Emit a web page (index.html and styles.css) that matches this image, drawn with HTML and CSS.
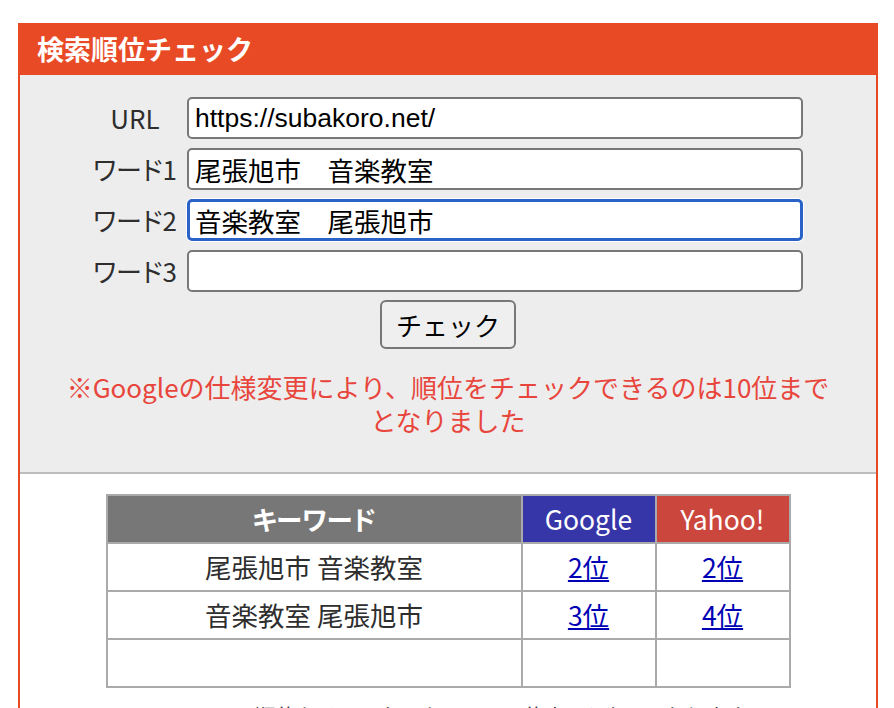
FILE: index.html
```html
<!DOCTYPE html>
<html lang="ja">
<head>
<meta charset="utf-8">
<title>検索順位チェック</title>
<link rel="stylesheet" href="styles.css">
</head>
<body>
<div class="page">
  <section class="box">
    <h2 class="box-title">検索順位チェック</h2>
    <div class="form-area">
      <div class="form-grid">
        <label class="field-label">URL</label>
        <input class="field-input" type="text" value="https://subakoro.net/">
        <label class="field-label">ワード1</label>
        <input class="field-input" type="text" value="尾張旭市　音楽教室">
        <label class="field-label">ワード2</label>
        <input class="field-input is-focused" type="text" value="音楽教室　尾張旭市">
        <label class="field-label">ワード3</label>
        <input class="field-input" type="text" value="">
      </div>
      <div class="btn-row"><button class="check-btn" type="button">チェック</button></div>
      <p class="notice">※Googleの仕様変更により、順位をチェックできるのは10位まで<br>となりました</p>
    </div>
    <div class="result-area">
      <table class="rank-table">
        <thead>
          <tr>
            <th class="th-keyword">キーワード</th>
            <th class="th-google">Google</th>
            <th class="th-yahoo">Yahoo!</th>
          </tr>
        </thead>
        <tbody>
          <tr><td>尾張旭市 音楽教室</td><td><a href="#">2位</a></td><td><a href="#">2位</a></td></tr>
          <tr><td>音楽教室 尾張旭市</td><td><a href="#">3位</a></td><td><a href="#">4位</a></td></tr>
          <tr><td></td><td></td><td></td></tr>
        </tbody>
      </table>
      <p class="note">※Yahoo!の順位をチェックできるのは10位までとなっております</p>
    </div>
  </section>
</div>
</body>
</html>
```
FILE: styles.css
```css
html, body {
  margin: 0;
  padding: 0;
  background: #ffffff;
}
body {
  font-family: "Noto Sans CJK JP", "Noto Sans", sans-serif;
  color: #333333;
}
.page {
  padding: 23px 16px 0 18px;
}
.box {
  border: 2px solid #e94a26;
  border-top: 0;
  background: #ffffff;
}
.box-title {
  margin: 0;
  height: 52px;
  background: #e94a26;
  color: #ffffff;
  font-size: 27px;
  font-weight: bold;
  line-height: 52px;
  padding-left: 17px;
}
.form-area {
  background: #ededed;
  padding: 22px 0 36px;
  border-bottom: 2px solid #bdbdbd;
}
.form-grid {
  display: grid;
  grid-template-columns: 92px 616px;
  column-gap: 6px;
  row-gap: 9px;
  justify-content: center;
  align-items: center;
  padding-right: 4px;
}
.field-label {
  text-align: center;
  font-size: 26px;
  color: #2e2e2e;
  font-feature-settings: "palt";
  line-height: 1;
}
.field-input {
  box-sizing: border-box;
  width: 616px;
  height: 42px;
  margin: 0;
  border: 2px solid #787878;
  border-radius: 5px;
  background: #ffffff;
  padding: 0 6px;
  font-family: "Liberation Sans", "Noto Sans CJK JP", sans-serif;
  font-size: 26.5px;
  color: #000000;
  outline: none;
}
.field-input.is-focused {
  border: 3px solid #2a62c8;
  padding: 0 5px;
  box-shadow: 0 0 0 1px #ffffff;
}
.btn-row {
  display: flex;
  justify-content: center;
  margin-top: 8px;
}
.check-btn {
  box-sizing: border-box;
  width: 136px;
  height: 49px;
  background: #efefef;
  border: 2px solid #777777;
  border-radius: 6px;
  font-family: "Noto Sans CJK JP", sans-serif;
  font-size: 26px;
  color: #000000;
  padding: 0;
}
.notice {
  margin: 21px 0 0;
  text-align: center;
  color: #e8463c;
  font-size: 26px;
  line-height: 33px;
}
.result-area {
  padding: 20px 0 0;
}
.rank-table {
  margin: 0 auto;
  border-collapse: collapse;
  border: 2px solid #aaaaaa;
  font-size: 26.5px;
}
.rank-table th,
.rank-table td {
  border: 2px solid #aaaaaa;
  height: 46px;
  padding: 0;
  text-align: center;
  line-height: 1;
}
.rank-table th {
  color: #ffffff;
}
.th-keyword {
  width: 413px;
  background: #777777;
  font-weight: bold;
  font-feature-settings: "palt";
}
.th-google {
  width: 132px;
  background: #3636a8;
  font-weight: normal;
}
.th-yahoo {
  width: 132px;
  background: #cb463d;
  font-weight: normal;
}
.rank-table td {
  color: #2e2e2e;
}
.rank-table a {
  color: #0000b4;
  text-decoration: underline;
}
.note {
  margin: 12px 0 0;
  text-align: center;
  font-size: 20.5px;
  color: #333333;
  padding-bottom: 40px;
}
```
